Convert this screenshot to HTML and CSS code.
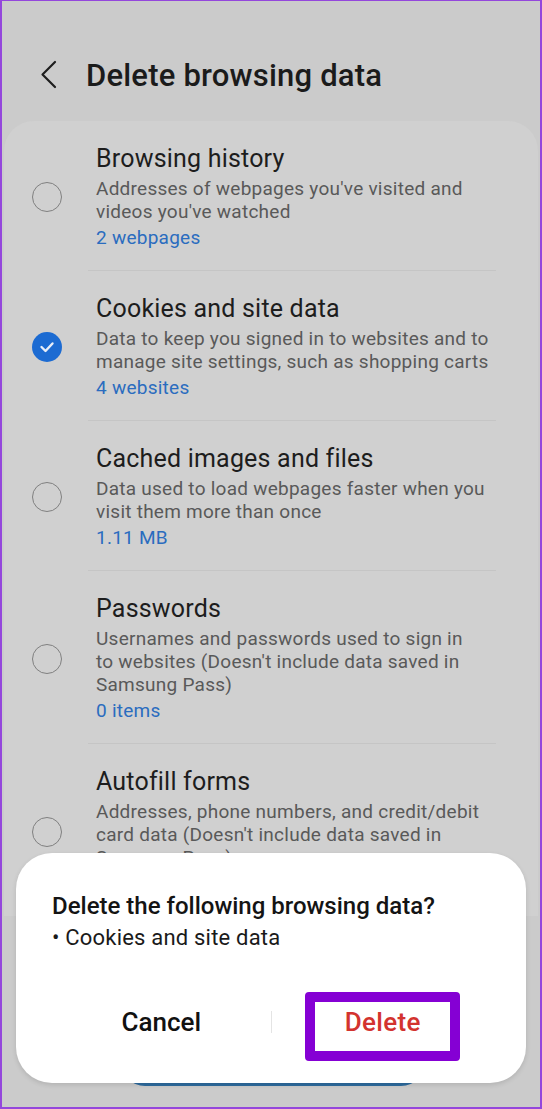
FILE: index.html
```html
<!DOCTYPE html>
<html lang="en">
<head>
<meta charset="utf-8">
<title>Delete browsing data</title>
<link rel="stylesheet" href="styles.css">
</head>
<body>
<div class="screen">
  <header class="header">
    <svg class="back" width="18" height="30" viewBox="0 0 18 30" aria-hidden="true">
      <polyline points="15,2 2.5,14.5 15,27" fill="none" stroke="#1e1e1e" stroke-width="2.2" stroke-linecap="round" stroke-linejoin="round"/>
    </svg>
    <h1 class="page-title">Delete browsing data</h1>
  </header>

  <div class="card">
    <div class="item">
      <span class="radio"></span>
      <div class="text">
        <div class="title">Browsing history</div>
        <div class="desc">Addresses of webpages you've visited and<br>videos you've watched</div>
        <div class="link">2 webpages</div>
      </div>
    </div>
    <div class="sep"></div>
    <div class="item">
      <span class="radio checked">
        <svg width="30" height="30" viewBox="0 0 30 30" aria-hidden="true">
          <polyline points="9.5,15 13.5,19 20.5,11.5" fill="none" stroke="#e8eef8" stroke-width="2.4" stroke-linecap="round" stroke-linejoin="round"/>
        </svg>
      </span>
      <div class="text">
        <div class="title">Cookies and site data</div>
        <div class="desc">Data to keep you signed in to websites and to<br>manage site settings, such as shopping carts</div>
        <div class="link">4 websites</div>
      </div>
    </div>
    <div class="sep"></div>
    <div class="item">
      <span class="radio"></span>
      <div class="text">
        <div class="title">Cached images and files</div>
        <div class="desc">Data used to load webpages faster when you<br>visit them more than once</div>
        <div class="link">1.11 MB</div>
      </div>
    </div>
    <div class="sep"></div>
    <div class="item">
      <span class="radio"></span>
      <div class="text">
        <div class="title">Passwords</div>
        <div class="desc">Usernames and passwords used to sign in<br>to websites (Doesn't include data saved in<br>Samsung Pass)</div>
        <div class="link">0 items</div>
      </div>
    </div>
    <div class="sep"></div>
    <div class="item">
      <span class="radio"></span>
      <div class="text">
        <div class="title">Autofill forms</div>
        <div class="desc">Addresses, phone numbers, and credit/debit<br>card data (Doesn't include data saved in<br>Samsung Pass)</div>
        <div class="link">0 items</div>
      </div>
    </div>
  </div>

  <div class="main-button">Delete data</div>

  <div class="dialog">
    <div class="dialog-title">Delete the following browsing data?</div>
    <div class="dialog-body">• Cookies and site data</div>
    <div class="dialog-actions">
      <div class="action"><span class="cancel">Cancel</span></div>
      <span class="divider"></span>
      <div class="action"><span class="delete">Delete</span></div>
    </div>
  </div>
</div>
</body>
</html>
```
FILE: styles.css
```css
* { box-sizing: border-box; }

html, body {
  margin: 0;
  padding: 0;
}

body {
  font-family: Roboto, "Noto Sans", "Liberation Sans", sans-serif;
  background: #cbcbcb;
}

.screen {
  position: relative;
  width: 542px;
  height: 1109px;
  overflow: hidden;
  background: #cbcbcb;
  border: 2px solid #9447dc;
  border-top-width: 1px;
}

.header {
  display: flex;
  align-items: center;
  gap: 28px;
  height: 120px;
  padding: 28px 0 0 38px;
}

.back {
  display: block;
  flex: none;
}

.page-title {
  margin: 0;
  font-size: 31px;
  font-weight: 500;
  color: #1b1b1b;
  letter-spacing: 0.2px;
}

.card {
  margin: 0 2px;
  background: #d0d0d0;
  border-radius: 30px 30px 0 0;
}

.item {
  display: flex;
  align-items: center;
  padding: 23px 0 20px 28px;
}

.radio {
  flex: none;
  width: 30px;
  height: 30px;
  border-radius: 50%;
  border: 1.6px solid #808080;
  margin-right: 34px;
}

.radio.checked {
  border: none;
  background: #1c6bd2;
}

.radio.checked svg { display: block; }

.text {
  white-space: nowrap;
}

.title {
  font-size: 25px;
  line-height: 30px;
  color: #1d1d1d;
  letter-spacing: 0.2px;
}

.desc {
  margin-top: 3px;
  font-size: 19px;
  line-height: 23px;
  color: #595959;
  letter-spacing: 0.25px;
}

.link {
  margin-top: 3px;
  font-size: 19px;
  line-height: 24px;
  color: #2a6cbf;
  letter-spacing: 0.25px;
}

.sep {
  height: 1px;
  background: #c5c5c5;
  margin: 0 42px 0 84px;
}

.main-button {
  position: absolute;
  left: 118px;
  bottom: 21px;
  width: 306px;
  height: 50px;
  border-radius: 25px;
  background: #2d6b9e;
  color: #d8e2ec;
  font-size: 20px;
  line-height: 50px;
  text-align: center;
}

.dialog {
  position: absolute;
  left: 14px;
  bottom: 24px;
  width: 510px;
  height: 230px;
  background: #ffffff;
  border-radius: 36px;
  padding: 38px 36px 22px;
  box-shadow: 0 2px 5px rgba(0, 0, 0, 0.12);
}

.dialog-title {
  font-size: 24px;
  line-height: 30px;
  font-weight: 500;
  color: #141414;
  white-space: nowrap;
}

.dialog-body {
  margin-top: 3px;
  font-size: 22px;
  line-height: 28px;
  color: #1a1a1a;
  letter-spacing: 0.2px;
}

.dialog-actions {
  display: flex;
  align-items: center;
  margin-top: 40px;
  height: 69px;
}

.action {
  flex: 1;
  display: flex;
  justify-content: center;
  align-items: center;
  height: 69px;
}

.cancel {
  font-size: 26px;
  font-weight: 500;
  color: #111111;
  padding-bottom: 9px;
}

.divider {
  flex: none;
  width: 1px;
  height: 22px;
  margin-bottom: 9px;
  background: #e4e4e4;
}

.delete {
  display: flex;
  align-items: center;
  justify-content: center;
  width: 155px;
  height: 69px;
  border: 10px solid #8500d4;
  border-radius: 4px;
  font-size: 26px;
  font-weight: 500;
  color: #d3332f;
  letter-spacing: 0.3px;
  padding-bottom: 9px;
  margin-left: 4px;
}
```
